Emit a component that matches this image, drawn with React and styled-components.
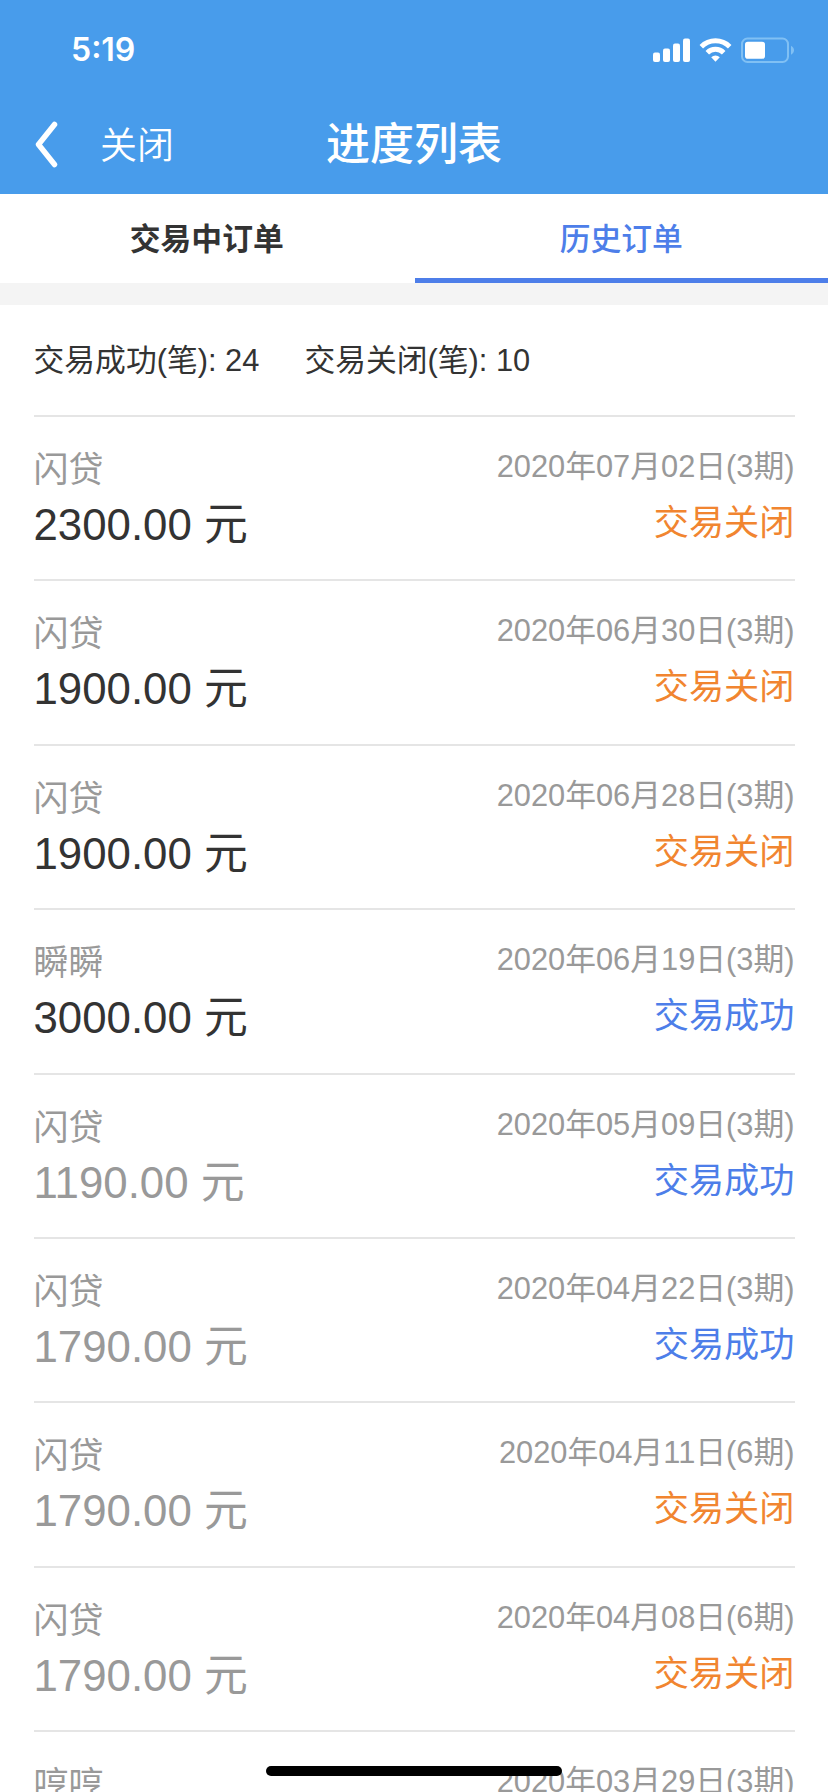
import React from 'react';
import styled, { createGlobalStyle } from 'styled-components';

const GlobalStyle = createGlobalStyle`
  html, body {
    margin: 0;
    background: #fff;
  }
`;

const Screen = styled.div`
  position: relative;
  display: flex;
  flex-direction: column;
  width: 828px;
  height: 1792px;
  overflow: hidden;
  background: #fff;
  color: #333;
  font-family: 'Liberation Sans', 'Noto Sans CJK SC', sans-serif;
`;

const Header = styled.header`
  flex: none;
  height: 194px;
  background: #489ceb;
  color: #fff;
`;

const StatusBar = styled.div`
  display: flex;
  justify-content: space-between;
  align-items: center;
  height: 99px;
  padding: 0 34px 0 71px;
  box-sizing: border-box;
`;

const Time = styled.span`
  padding-top: 1px;
  font-family: Inter, sans-serif;
  font-size: 32px;
  font-weight: 600;
  line-height: 40px;
`;

const StatusIcons = styled.svg`
  width: 142px;
  height: 26px;
`;

const NavBar = styled.div`
  display: grid;
  grid-template-columns: 1fr auto 1fr;
  align-items: center;
  height: 92px;
  padding: 0 34px;
`;

const NavLeft = styled.div`
  display: flex;
  align-items: center;
`;

const BackIcon = styled.svg`
  width: 25px;
  height: 48px;
`;

const Close = styled.span`
  margin: 3px 0 0 41px;
  font-size: 37px;
  font-weight: 350;
  line-height: 48px;
`;

const Title = styled.h1`
  margin: 0;
  font-size: 44px;
  font-weight: 500;
  line-height: 60px;
`;

const Tabs = styled.div`
  display: flex;
  flex: none;
  height: 89px;
`;

const Tab = styled.div`
  flex: 1;
  box-sizing: border-box;
  height: 89px;
  margin-left: ${props => (props.active ? '1px' : '0')};
  border-bottom: 5px solid ${props => (props.active ? '#4d7ee9' : '#fff')};
  color: ${props => (props.active ? '#4d7ee9' : '#333')};
  font-size: 30.8px;
  font-weight: ${props => (props.active ? 500 : 700)};
  line-height: 92px;
  text-align: center;
`;

const Gap = styled.div`
  flex: none;
  height: 22px;
  background: #f4f4f4;
`;

const Content = styled.div`
  flex: none;
  padding: 0 33.5px;
`;

const Summary = styled.div`
  display: flex;
  gap: 45px;
  height: 110px;
  font-size: 30.8px;
  line-height: 111px;
`;

const Order = styled.div`
  display: flex;
  justify-content: space-between;
  box-sizing: border-box;
  height: 164.375px;
  padding-top: 31px;
  border-top: 2px solid #e5e5e5;
`;

const Col = styled.div`
  display: flex;
  flex-direction: column;
  align-items: ${props => (props.$right ? 'flex-end' : 'flex-start')};
  white-space: nowrap;
`;

const Name = styled.span`
  color: #999;
  font-size: 35px;
  line-height: 44px;
`;

const Amount = styled.span`
  margin-top: 5px;
  color: ${props => (props.$muted ? '#999' : '#333')};
  font-size: 43.8px;
  line-height: 56px;
`;

const DateText = styled.span`
  color: #999;
  font-size: 30.8px;
  line-height: 38px;
`;

const Status = styled.span`
  margin-top: 15px;
  color: ${props => (props.$success ? '#4d7ee9' : '#f18530')};
  font-size: 35.2px;
  line-height: 44px;
`;

const HomeIndicator = styled.div`
  position: absolute;
  left: 266px;
  bottom: 16px;
  width: 296px;
  height: 10px;
  border-radius: 5px;
  background: #000;
`;

const orders = [
  { name: '闪贷', amount: '2300.00', date: '2020年07月02日(3期)' },
  { name: '闪贷', amount: '1900.00', date: '2020年06月30日(3期)' },
  { name: '闪贷', amount: '1900.00', date: '2020年06月28日(3期)' },
  { name: '瞬瞬', amount: '3000.00', date: '2020年06月19日(3期)', success: true },
  { name: '闪贷', amount: '1190.00', date: '2020年05月09日(3期)', success: true, muted: true },
  { name: '闪贷', amount: '1790.00', date: '2020年04月22日(3期)', success: true, muted: true },
  { name: '闪贷', amount: '1790.00', date: '2020年04月11日(6期)', muted: true },
  { name: '闪贷', amount: '1790.00', date: '2020年04月08日(6期)', muted: true },
  { name: '哼哼', date: '2020年03月29日(3期)' },
];

const PhoneStatus = () => (
  <StatusIcons viewBox="0 0 142 26" fill="#fff">
    <rect x="1" y="15.5" width="7" height="9.5" rx="2" />
    <rect x="11" y="11.5" width="7" height="13.5" rx="2" />
    <rect x="21" y="6.5" width="7" height="18.5" rx="2" />
    <rect x="31" y="1.5" width="7" height="23.5" rx="2" />
    <g fill="none" stroke="#fff" strokeWidth="5">
      <path d="M49.3 9.7a20.2 20.2 0 0 1 28.4 0" />
      <path d="M55.3 15.7a11.6 11.6 0 0 1 16.4 0" />
    </g>
    <path d="M59.2 20.2a6.4 6.4 0 0 1 8.6 0L63.5 24.8z" />
    <rect x="90" y="1.5" width="46" height="23.5" rx="5.5" fill="none" stroke="#80c0f4" strokeWidth="2" />
    <rect x="93" y="4.7" width="20" height="17" rx="2.8" />
    <path d="M139 8.8c4 2 4 7 0 9z" fill="#80c0f4" />
  </StatusIcons>
);

export default function App() {
  return (
    <Screen>
      <GlobalStyle />
      <Header>
        <StatusBar>
          <Time>5:19</Time>
          <PhoneStatus />
        </StatusBar>
        <NavBar>
          <NavLeft>
            <BackIcon viewBox="0 0 25 48" fill="none" stroke="#fff" strokeWidth="5.5">
              <path d="M20.5 3.5L4.5 23.5L20.5 43.5" strokeLinecap="round" strokeLinejoin="round" />
            </BackIcon>
            <Close>关闭</Close>
          </NavLeft>
          <Title>进度列表</Title>
        </NavBar>
      </Header>
      <Tabs>
        <Tab>交易中订单</Tab>
        <Tab active>历史订单</Tab>
      </Tabs>
      <Gap />
      <Content>
        <Summary>
          <span>交易成功(笔): 24</span>
          <span>交易关闭(笔): 10</span>
        </Summary>
        {orders.map((order, index) => (
          <Order key={index}>
            <Col>
              <Name>{order.name}</Name>
              {order.amount && <Amount $muted={order.muted}>{order.amount} 元</Amount>}
            </Col>
            <Col $right>
              <DateText>{order.date}</DateText>
              {order.amount && (
                <Status $success={order.success}>
                  {order.success ? '交易成功' : '交易关闭'}
                </Status>
              )}
            </Col>
          </Order>
        ))}
      </Content>
      <HomeIndicator />
    </Screen>
  );
}
